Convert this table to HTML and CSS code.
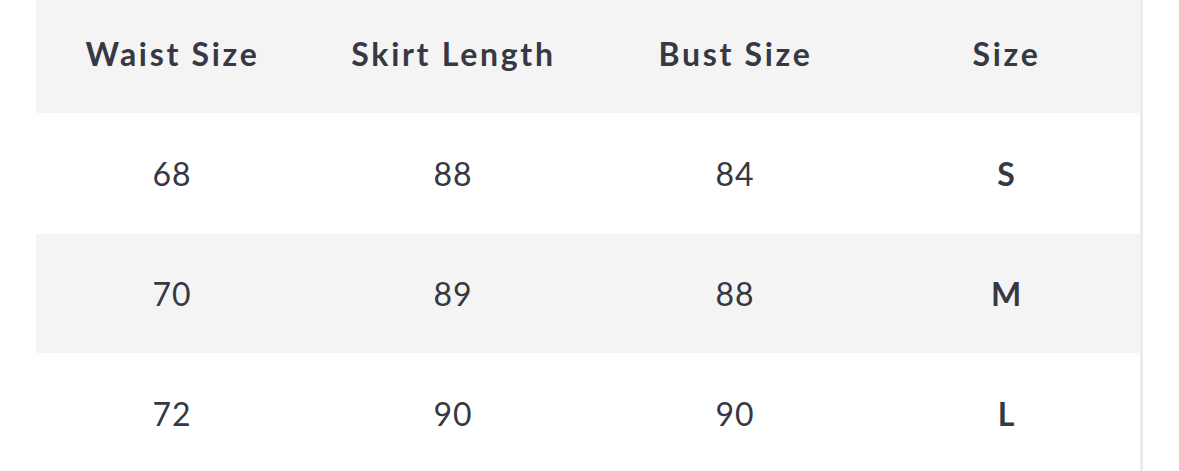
FILE: index.html
```html
<!DOCTYPE html>
<html>
<head>
<meta charset="utf-8">
<link rel="stylesheet" href="styles.css">
</head>
<body>
<div class="wrap">
  <div class="table">
    <div class="row head">
      <div class="cell">Waist Size</div>
      <div class="cell">Skirt Length</div>
      <div class="cell">Bust Size</div>
      <div class="cell">Size</div>
    </div>
    <div class="row">
      <div class="cell">68</div>
      <div class="cell">88</div>
      <div class="cell">84</div>
      <div class="cell strong">S</div>
    </div>
    <div class="row alt">
      <div class="cell">70</div>
      <div class="cell">89</div>
      <div class="cell">88</div>
      <div class="cell strong">M</div>
    </div>
    <div class="row">
      <div class="cell">72</div>
      <div class="cell">90</div>
      <div class="cell">90</div>
      <div class="cell strong">L</div>
    </div>
  </div>
</div>
</body>
</html>
```
FILE: styles.css
```css
html, body {
  margin: 0;
  padding: 0;
  background: #ffffff;
  height: 100%;
  overflow: hidden;
}
.wrap {
  padding-left: 36px;
  height: 100%;
}
.table {
  width: 1104px;
  height: 100%;
  border-right: 3px solid #ececed;
  font-family: Lato, "Noto Sans", sans-serif;
  color: #363843;
}
.row {
  display: grid;
  grid-template-columns: 270px 292px 272px 270px;
  height: 120px;
  align-items: center;
  font-size: 32px;
  letter-spacing: 1px;
}
.head {
  height: 113px;
  background: #f4f4f5;
  font-weight: 700;
  padding-bottom: 7px;
  box-sizing: border-box;
  letter-spacing: 2.7px;
}
.row:nth-child(2) { height: 121px; }
.row:nth-child(3) { height: 119px; }
.alt {
  background: #f4f4f5;
}
.cell {
  text-align: center;
  padding-left: 2px;
}
.head .cell {
  padding-left: 3px;
}
.strong {
  font-weight: 700;
  letter-spacing: 0;
  font-size: 32px;
}
```
